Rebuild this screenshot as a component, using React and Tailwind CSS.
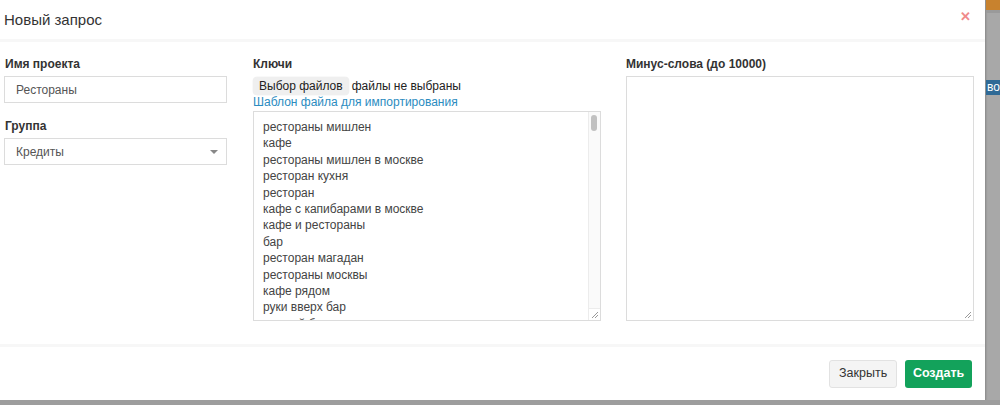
import React from 'react';

const keys = [
  'рестораны мишлен',
  'кафе',
  'рестораны мишлен в москве',
  'ресторан кухня',
  'ресторан',
  'кафе с капибарами в москве',
  'кафе и рестораны',
  'бар',
  'ресторан магадан',
  'рестораны москвы',
  'кафе рядом',
  'руки вверх бар',
  'лучший бар',
];

function Grip() {
  return (
    <svg className="absolute right-[1px] bottom-[1px]" width="8" height="8" viewBox="0 0 8 8">
      <path d="M1 7 L7 1 M4 7 L7 4" stroke="#9a9a9a" strokeWidth="1" />
    </svg>
  );
}

export default function App() {
  return (
    <div className="w-[1000px] h-[405px] bg-[#a8a8a8] flex flex-col overflow-hidden font-['Liberation_Sans',Arial,sans-serif] text-[12px] text-[#333]">
      <div className="flex flex-1">
        <div className="w-[987px] h-[400px] bg-white flex flex-col shadow-[1px_1px_2px_rgba(0,0,0,0.2)]">
          <div className="h-[42px] shrink-0 flex items-center justify-between pl-[4px] pr-[14px] border-b-[3px] border-[#f7f7f7]">
            <h4 className="text-[15px] text-[#333] pt-[1px]">Новый запрос</h4>
            <span className="text-[#f08a8a] text-[13px] font-bold leading-none pb-[6px]">✕</span>
          </div>
          <div className="flex shrink-0 pl-[4px] pt-[14px] h-[305px] border-b-[3px] border-[#f7f7f7]">
            <div className="w-[223px] flex flex-col">
              <label className="font-bold pl-[1px] leading-[16px]">Имя проекта</label>
              <div className="mt-[4px] h-[27px] border border-[#dcdcdc] flex items-center pl-[11px] text-[#555]">Рестораны</div>
              <label className="font-bold pl-[1px] mt-[15px] leading-[16px]">Группа</label>
              <div className="mt-[4px] h-[27px] border border-[#dcdcdc] flex items-center justify-between pl-[11px] pr-[8px] text-[#555]">
                <span>Кредиты</span>
                <span className="w-0 h-0 border-l-[4px] border-r-[4px] border-t-[4px] border-l-transparent border-r-transparent border-t-[#888]" />
              </div>
            </div>
            <div className="w-[348px] ml-[26px] flex flex-col">
              <label className="font-bold leading-[16px]">Ключи</label>
              <div className="flex items-center mt-[5px] h-[18px]">
                <span className="h-[18px] px-[6px] bg-[#efefef] rounded-[4px] flex items-center text-[#222] shadow-[0_0_0_0.5px_rgba(0,0,0,0.05)]">Выбор файлов</span>
                <span className="ml-[3px] text-[#222]">файлы не выбраны</span>
              </div>
              <a className="text-[#2b8cbf] leading-[14px]">Шаблон файла для импортирования</a>
              <div className="relative mt-[2px] h-[210px] border border-[#dcdcdc] overflow-hidden">
                <div className="pl-[9px] pt-[7px] text-[12px] leading-[16.4px] text-[#444]">
                  {keys.map((k, i) => (
                    <div key={i}>{k}</div>
                  ))}
                </div>
                <div className="absolute top-0 right-0 w-[12px] h-full border-l border-[#ececec] bg-[#fafafa]">
                  <div className="mt-[3px] ml-[2px] w-[6px] h-[16px] rounded-[3px] bg-[#c1c1c1]" />
                </div>
                <div className="absolute right-0 bottom-0 w-[12px] h-[12px] bg-white border-l border-t border-[#ececec]" />
                <Grip />
              </div>
            </div>
            <div className="w-[348px] ml-[25px] flex flex-col">
              <label className="font-bold leading-[16px]">Минус-слова (до 10000)</label>
              <div className="relative mt-[4px] h-[245px] border border-[#dcdcdc]">
                <Grip />
              </div>
            </div>
          </div>
          <div className="flex-1 flex items-center justify-end gap-[8px] pr-[13px]">
            <button className="h-[28px] w-[68px] rounded-[3px] bg-[#f4f4f4] border border-[#e2e2e2] text-[#333] text-[12.5px]">Закрыть</button>
            <button className="h-[28px] w-[67px] rounded-[3px] bg-[#13a25b] text-white font-bold text-[12.5px]">Создать</button>
          </div>
        </div>
        <div className="flex-1 flex flex-col border-l border-[#909090]">
          <div className="h-[10px] bg-[#c8822e]" />
          <div className="h-[3px] bg-[#9a9a9a]" />
          <div className="mt-[67px] h-[15px] bg-[#2f6a96] text-white text-[12px] leading-[15px] overflow-hidden whitespace-nowrap pl-[1px]">во</div>
        </div>
      </div>
      <div className="h-[5px] bg-[#9d9d9d]" />
    </div>
  );
}
